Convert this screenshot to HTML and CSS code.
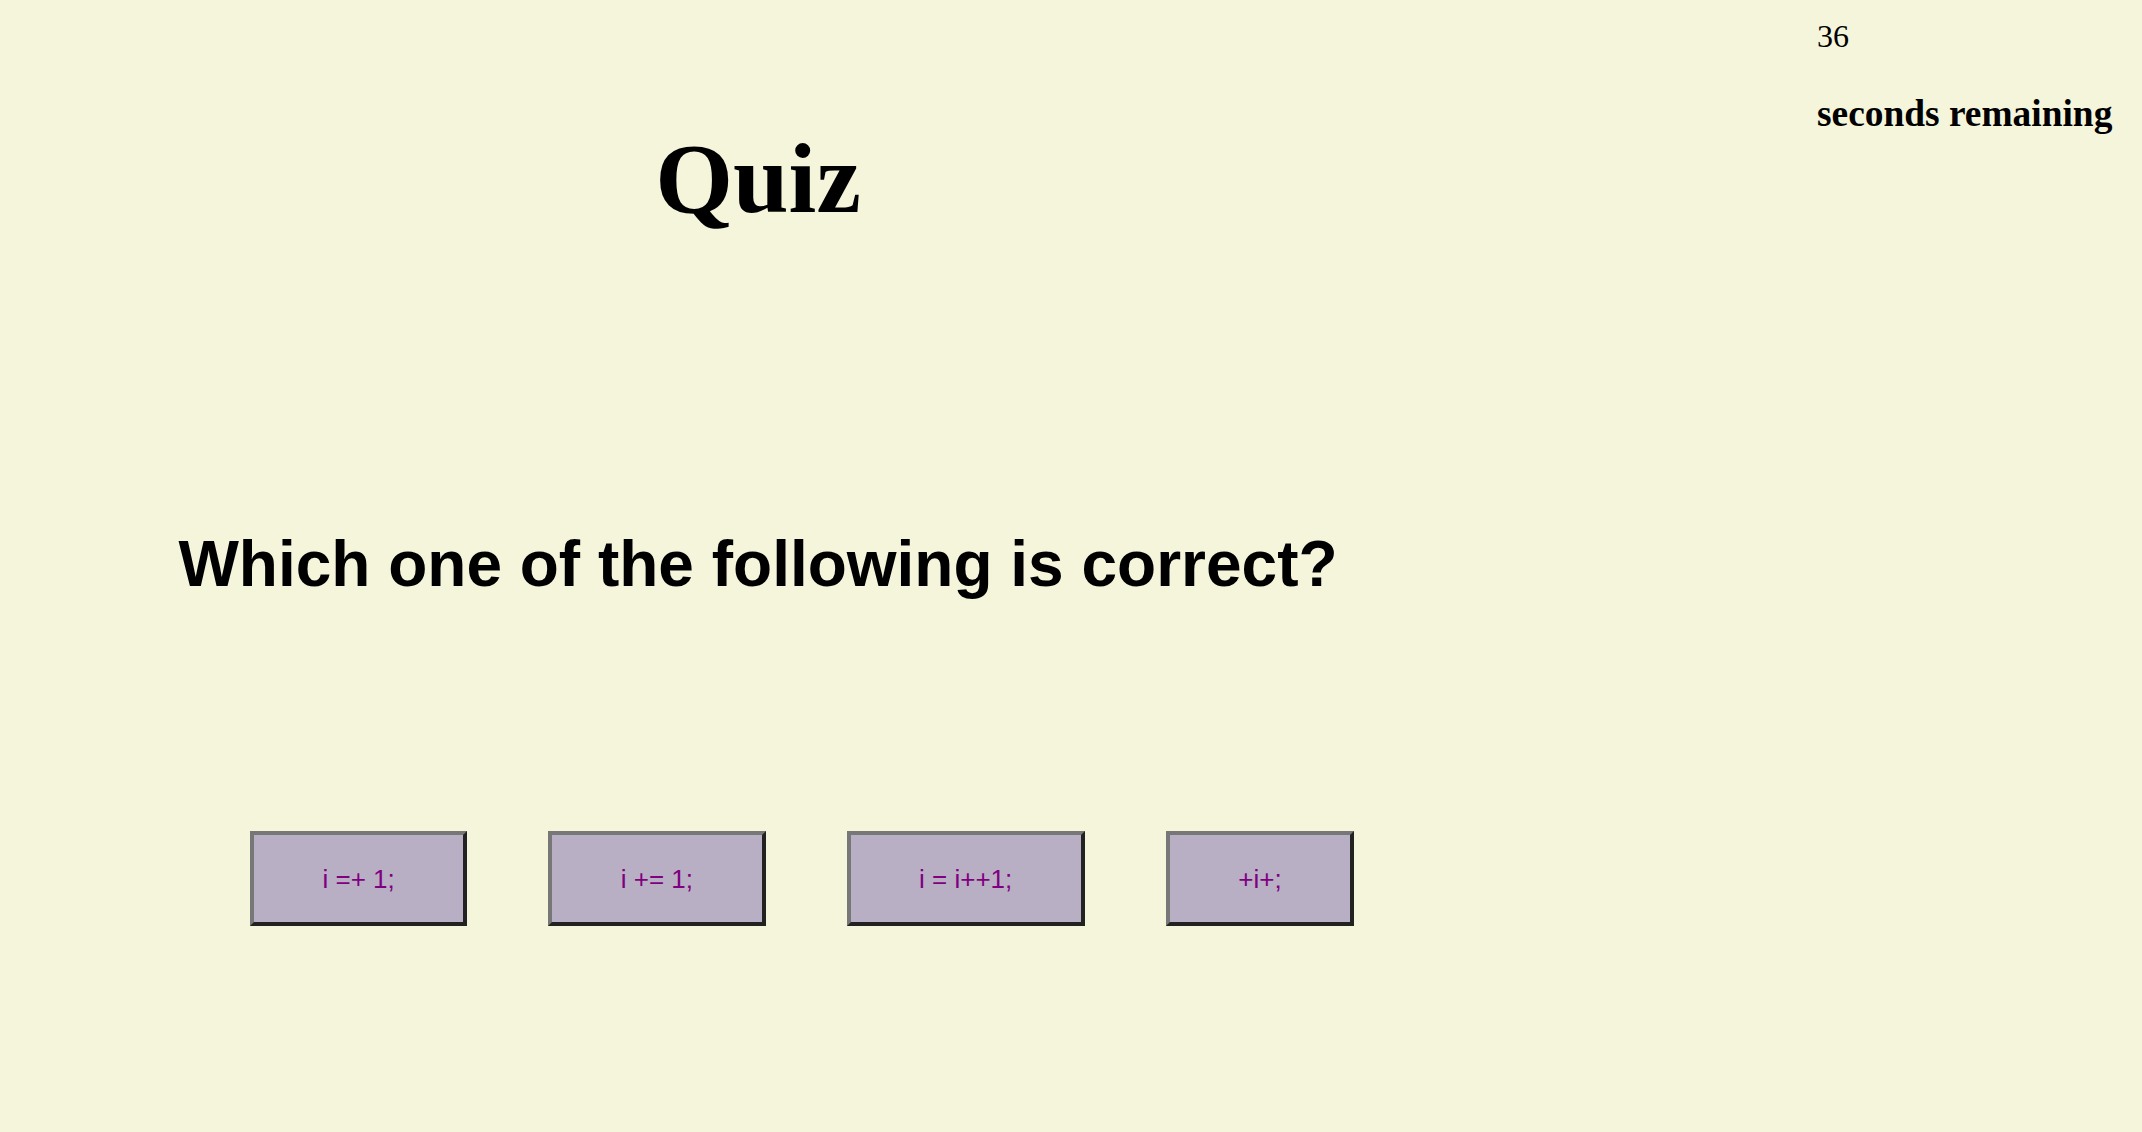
FILE: index.html
```html
<!DOCTYPE html>
<html lang="en">
<head>
<meta charset="utf-8">
<title>Quiz</title>
<link rel="stylesheet" href="styles.css">
</head>
<body>
<div class="page">
  <main class="quiz">
    <h1 class="quiz-title">Quiz</h1>
    <h2 class="question">Which one of the following is correct?</h2>
    <div class="answers">
      <button class="answer">i =+ 1;</button>
      <button class="answer">i += 1;</button>
      <button class="answer">i = i++1;</button>
      <button class="answer">+i+;</button>
    </div>
  </main>
  <aside class="timer">
    <div class="timer-count">36</div>
    <h3 class="timer-label">seconds remaining</h3>
  </aside>
</div>
</body>
</html>
```

FILE: styles.css
```css
html, body {
  background: #f5f5dc;
}
body {
  margin: 8px;
  font-family: "Liberation Serif", "Times New Roman", serif;
  color: #000;
}
.page {
  display: flex;
  align-items: flex-start;
}
.quiz {
  flex: 0 0 1500px;
  width: 1500px;
}
.quiz-title {
  margin: 113px 0 0;
  font-family: "Liberation Serif", "Times New Roman", serif;
  font-size: 100px;
  font-weight: bold;
  text-align: center;
  line-height: normal;
}
.question {
  margin: 291px 0 0;
  font-family: "Liberation Sans", Arial, sans-serif;
  font-size: 64px;
  font-weight: bold;
  text-align: center;
  line-height: normal;
}
.answers {
  display: flex;
  gap: 81px;
  margin-top: 230px;
  padding-left: 242px;
}
.answer {
  box-sizing: border-box;
  height: 95px;
  padding: 0 68.5px;
  background: #b8afc5;
  color: #800080;
  font-family: "Liberation Sans", Arial, sans-serif;
  font-size: 26px;
  line-height: 30px;
  border-style: solid;
  border-width: 4px;
  border-color: #777777 #222222 #222222 #777777;
  border-radius: 0;
  cursor: pointer;
}
.timer {
  margin-left: auto;
  width: 317px;
  padding-top: 10px;
  font-size: 32px;
}
.timer-count {
  line-height: normal;
}
.timer-label {
  margin: 37px 0 0;
  font-size: 37.4px;
  font-weight: bold;
  line-height: normal;
}
```
